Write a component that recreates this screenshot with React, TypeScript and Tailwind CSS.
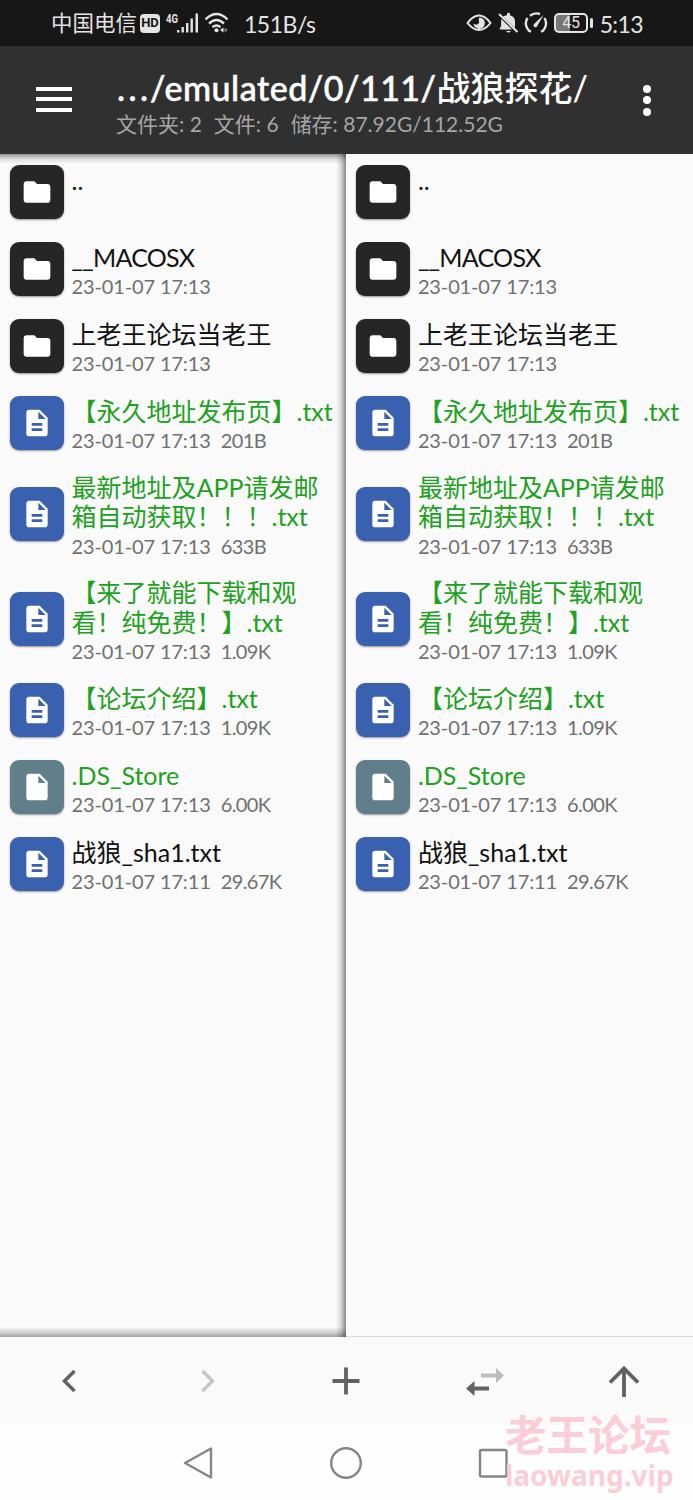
type Kind = "folder" | "text" | "file";

type Entry = {
  kind: Kind;
  lines: string[];
  date?: string;
  size?: string;
  green?: boolean;
  tracking?: string;
};

const entries: Entry[] = [
  { kind: "folder", lines: [".."] },
  { kind: "folder", lines: ["__MACOSX"], date: "23-01-07 17:13", tracking: "tracking-[-0.75px]" },
  { kind: "folder", lines: ["上老王论坛当老王"], date: "23-01-07 17:13" },
  { kind: "text", lines: ["【永久地址发布页】.txt"], date: "23-01-07 17:13", size: "201B", green: true },
  { kind: "text", lines: ["最新地址及APP请发邮", "箱自动获取！！！.txt"], date: "23-01-07 17:13", size: "633B", green: true },
  { kind: "text", lines: ["【来了就能下载和观", "看！纯免费！】.txt"], date: "23-01-07 17:13", size: "1.09K", green: true },
  { kind: "text", lines: ["【论坛介绍】.txt"], date: "23-01-07 17:13", size: "1.09K", green: true },
  { kind: "file", lines: [".DS_Store"], date: "23-01-07 17:13", size: "6.00K", green: true },
  { kind: "text", lines: ["战狼_sha1.txt"], date: "23-01-07 17:11", size: "29.67K" },
];

const iconBg = {
  folder: "bg-[#262626]",
  text: "bg-[#3a60b0]",
  file: "bg-[#607f8b]",
};

const iconPath = {
  folder: "M10 4H4c-1.1 0-1.99.9-1.99 2L2 18c0 1.1.9 2 2 2h16c1.1 0 2-.9 2-2V8c0-1.1-.9-2-2-2h-8l-2-2z",
  text: "M14 2H6c-1.1 0-1.99.9-1.99 2L4 20c0 1.1.89 2 1.99 2H18c1.1 0 2-.9 2-2V8l-6-6zm2 16H8v-2h8v2zm0-4H8v-2h8v2zm-3-5V3.5L18.5 9H13z",
  file: "M6 2c-1.1 0-1.99.9-1.99 2L4 20c0 1.1.89 2 1.99 2H18c1.1 0 2-.9 2-2V8l-6-6H6zm7 7V3.5L18.5 9H13z",
};

function Row({ entry }: { entry: Entry }) {
  return (
    <div className={`flex items-center pl-[9.5px] ${entry.lines.length > 1 ? "h-[105.3px]" : "h-[76.8px]"}`}>
      <div className={`flex size-[54px] shrink-0 items-center justify-center rounded-[9px] shadow-[0_1px_2px_rgba(0,0,0,0.4)] ${iconBg[entry.kind]}`}>
        <svg viewBox="0 0 24 24" className="size-8 fill-white">
          <path d={iconPath[entry.kind]} />
        </svg>
      </div>
      <div className="ml-2 whitespace-nowrap pt-[3px]">
        <div className={`text-[25px] leading-[29.5px] ${entry.green ? "text-[#21a121]" : "text-[#111]"} ${entry.tracking ?? ""}`}>
          {entry.lines.map((line) => (
            <div key={line}>{line}</div>
          ))}
        </div>
        <div className="mt-[2px] flex h-6 gap-2.5 text-[20px] leading-6 text-[#707070]">
          <span className="tracking-[-0.13px]">{entry.date}</span>
          {entry.size && <span className="tracking-[-0.6px]">{entry.size}</span>}
        </div>
      </div>
    </div>
  );
}

function StatusBar() {
  return (
    <div className="flex h-[46px] items-center bg-[#171717] pl-[51px] pr-[50px] text-[#e4e4e4]">
      <span className="text-[21.5px]">中国电信</span>
      <span className="ml-[3px] flex h-[19px] w-5 items-center justify-center rounded-[4px] bg-[#e4e4e4] font-['Roboto'] text-[13px] font-bold text-[#171717]">HD</span>
      <svg viewBox="0 0 34 24" className="ml-[6px] h-6 w-[34px] fill-current">
        <text x="0" y="11.5" className="font-['Roboto'] text-[12px] font-bold" textLength="12" lengthAdjust="spacingAndGlyphs">4G</text>
        <path d="M11 19h2.4v2.5H11zM15.5 16h2.4v5.5h-2.4zM20 12h2.4v9.5H20zM24.5 7.5h2.4v14h-2.4zM29.5 2.5H32v19h-2.5z" />
      </svg>
      <svg viewBox="0 0 26 24" className="ml-[4px] h-6 w-[26px]" fill="none" stroke="currentColor" strokeWidth="2.4">
        <path d="M1.5 8.500Q12.5-2.500 23.5 8.500M5 12.500q7.500-7 15 0M8.500 16.200q4-3.500 8 0" />
        <circle cx="12.5" cy="19.3" r="2" fill="currentColor" stroke="none" />
        <path d="m16 19 3.500-2.500v5z" fill="currentColor" stroke="none" />
        <path d="m24 19-3.500-2.500v5z" fill="#777" stroke="none" />
      </svg>
      <span className="ml-[14px] pt-0.5 text-[23px] tracking-[-0.5px]">151B/s</span>
      <div className="ml-auto flex items-center">
        <svg viewBox="0 0 26 20" className="h-5 w-[26px]" fill="none" stroke="currentColor" strokeWidth="2">
          <path d="M1.5 10Q7 2.5 13 2.5T24.5 10Q19 17 13 17T1.5 10z" />
          <path d="M13.5 4.500a5.700 5.700 0 1 1-6 6q2.500 2 4.500.5t.8-3.300q-.3-2 .7-3.200z" fill="currentColor" stroke="none" />
        </svg>
        <svg viewBox="0 0 22 22" className="ml-[5px] h-[22px] w-[22px] fill-current">
          <path d="M6 4.500 18 16V9.500q0-5-5-6.300V1.500q-1.500-1.500-3 0v1.700Q7.500 3.500 6 4.500zM4.300 7 15 17.500H3q-1-1 1-3zM9 19h5q-2.500 3-5 0z" />
          <path d="m2 2 18.500 18" fill="none" stroke="currentColor" strokeWidth="2" />
        </svg>
        <svg viewBox="0 0 26 24" className="ml-[4px] h-6 w-[26px]" fill="none" stroke="currentColor" strokeWidth="2.4">
          <path d="M8 20.500 6 19.800A10 10 0 0 1 4.500 7M7 4.800A10.500 10.500 0 0 1 17 3M21.500 7a10.500 10.500 0 0 1-1.500 12.800l-2 .7" />
          <path d="m20.500 4-6 10.500a2 2 0 1 1-3-2z" fill="currentColor" stroke="none" />
        </svg>
        <div className="ml-[5px] flex h-5 w-[34px] items-center justify-center rounded-[5px] border-2 border-current bg-linear-to-r from-[#777] from-45% to-transparent to-45% font-['Roboto'] text-[16px]">45</div>
        <div className="ml-[2px] h-[10px] w-[2.5px] rounded bg-current" />
        <span className="ml-[7px] pt-0.5 text-[23px] tracking-[-0.6px]">5:13</span>
      </div>
    </div>
  );
}

function Header() {
  return (
    <header className="flex h-[108px] bg-[#303030] text-white">
      <div className="flex w-[116px] items-center pb-0.5 pl-9">
        <div className="flex flex-col gap-[6.5px]">
          <div className="h-1 w-9 bg-white" />
          <div className="h-1 w-9 bg-white" />
          <div className="h-1 w-9 bg-white" />
        </div>
      </div>
      <div className="flex-1 whitespace-nowrap pt-[22px]">
        <h1 className="flex text-[34px] font-medium leading-10">
          <span className="w-[34px] pl-px tracking-[3.5px] [-webkit-text-stroke:0.5px_white]">...</span>
          <span className="tracking-[0.5px] [-webkit-text-stroke:0.5px_white]">/emulated/0/111/</span>
          <span>战狼探花/</span>
        </h1>
        <div className="flex gap-[12px] text-[21px] leading-8 text-[#a6a6a6]">
          <span>文件夹: 2</span>
          <span>文件: 6</span>
          <span>储存: 87.92G/112.52G</span>
        </div>
      </div>
      <div className="flex w-[50px] flex-col items-start justify-center gap-[3.5px]">
        <div className="size-2 rounded-full bg-white" />
        <div className="size-2 rounded-full bg-white" />
        <div className="size-2 rounded-full bg-white" />
      </div>
    </header>
  );
}

function Pane({ active }: { active?: boolean }) {
  return (
    <section className={`relative h-full bg-[#fafafa] ${active ? "w-[346.4px]" : "flex-1 border-b border-[#dcdcdc]"}`}>
      {entries.map((entry, i) => (
        <Row key={i} entry={entry} />
      ))}
      {active && (
        <>
          <div className="absolute inset-x-0 top-0 h-2.5 bg-linear-to-b from-black/40 via-black/12 to-transparent" />
          <div className="absolute inset-y-0 right-0 w-2.5 bg-linear-to-l from-black/45 via-black/15 to-transparent" />
          <div className="absolute inset-x-0 bottom-0 h-2.5 bg-linear-to-t from-black/35 via-black/15 to-transparent" />
        </>
      )}
    </section>
  );
}

function Toolbar() {
  return (
    <div className="grid h-[88px] grid-cols-5 place-items-center bg-[#fafafa] text-[#616161]">
      <svg viewBox="0 0 36 36" className="size-9" fill="none" stroke="currentColor" strokeWidth="3.5">
        <path d="M23.5 8 13.5 18l10 10" />
      </svg>
      <svg viewBox="0 0 36 36" className="size-9 text-[#c6c6c6]" fill="none" stroke="currentColor" strokeWidth="3.5">
        <path d="m12.5 8 10 10-10 10" />
      </svg>
      <svg viewBox="0 0 36 36" className="size-9" fill="none" stroke="currentColor" strokeWidth="3.8">
        <path d="M18 4.5v27M4.5 18h27" />
      </svg>
      <svg viewBox="0 0 38 36" className="h-9 w-[38px]">
        <path d="M15 10.5h15V5l8 7.500-8 7.500v-5.500H15z" fill="#bdbdbd" />
        <path d="M23 23.5H8.500V18L0 25.500 8.500 33v-5.500H23z" fill="#616161" />
      </svg>
      <svg viewBox="0 0 36 36" className="size-9" fill="none" stroke="currentColor" strokeWidth="3.8">
        <path d="M18 34V6M4 19.5 18 5.5l14 14" />
      </svg>
    </div>
  );
}

function SystemNav() {
  return (
    <div className="relative flex h-[75px] items-center justify-center gap-[111px] bg-[#fefefe] pr-px">
      <svg viewBox="0 0 36 36" className="size-9" fill="none" stroke="#858585" strokeWidth="2.4" strokeLinejoin="round">
        <path d="M4 18 30 3.5v29z" />
      </svg>
      <svg viewBox="0 0 36 36" className="size-9" fill="none" stroke="#858585" strokeWidth="2.4">
        <circle cx="18" cy="18" r="14.8" />
      </svg>
      <svg viewBox="0 0 36 36" className="size-9" fill="none" stroke="#858585" strokeWidth="2.4">
        <rect x="5" y="5" width="26.5" height="26.5" rx="1.5" />
      </svg>
      <div className="absolute -top-[14px] left-[505px] whitespace-nowrap font-bold text-[#fbced7]">
        <div className="text-[41.5px] leading-[48px]">老王论坛</div>
        <div className="font-['Noto_Sans'] text-[28px] leading-8">laowang.vip</div>
      </div>
    </div>
  );
}

export default function App() {
  return (
    <div className="flex h-[1500px] w-[693px] flex-col overflow-hidden font-['Lato','Noto_Sans_CJK_SC',sans-serif]">
      <StatusBar />
      <Header />
      <main className="flex h-[1183px]">
        <Pane active />
        <Pane />
      </main>
      <Toolbar />
      <SystemNav />
    </div>
  );
}
